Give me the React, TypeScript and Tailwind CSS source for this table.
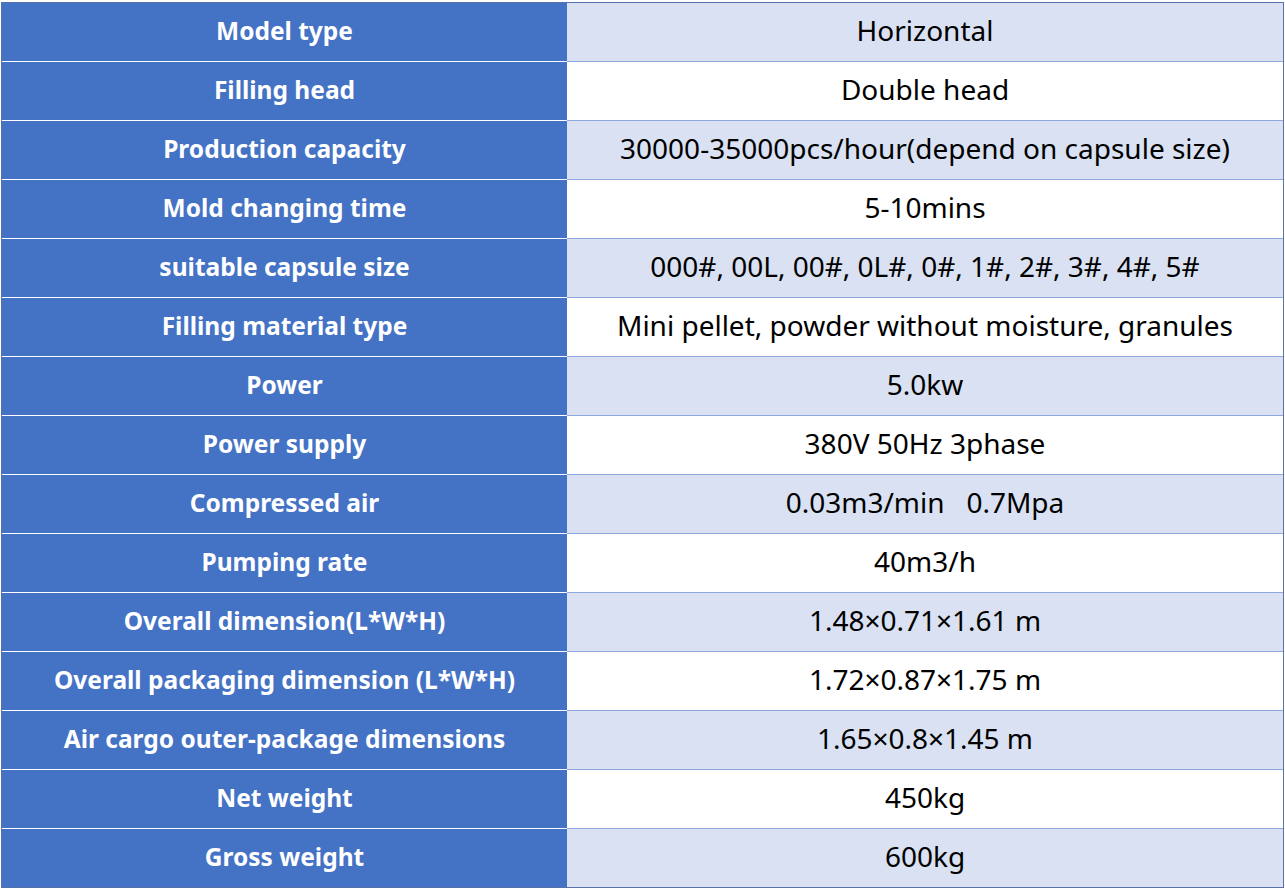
const ROWS: [string, string][] = [
  ['Model type', 'Horizontal'],
  ['Filling head', 'Double head'],
  ['Production capacity', '30000-35000pcs/hour(depend on capsule size)'],
  ['Mold changing time', '5-10mins'],
  ['suitable capsule size', '000#, 00L, 00#, 0L#, 0#, 1#, 2#, 3#, 4#, 5#'],
  ['Filling material type', 'Mini pellet, powder without moisture, granules'],
  ['Power', '5.0kw'],
  ['Power supply', '380V 50Hz 3phase'],
  ['Compressed air', '0.03m3/min\u00a0\u00a0\u00a00.7Mpa'],
  ['Pumping rate', '40m3/h'],
  ['Overall dimension(L*W*H)', '1.48×0.71×1.61 m'],
  ['Overall packaging dimension (L*W*H)', '1.72×0.87×1.75 m'],
  ['Air cargo outer-package dimensions', '1.65×0.8×1.45 m'],
  ['Net weight', '450kg'],
  ['Gross weight', '600kg']
]

export default function App(): React.JSX.Element {
  return (
    <div className="min-h-screen bg-white pt-[2px] pl-[1px] font-['Noto_Sans','Open_Sans',sans-serif]">
      <div className="w-[1283px] border border-[#5672ad] flex flex-col">
        {ROWS.map(([label, value], i) => (
          <div key={label} className="flex h-[59px] first:h-[58px]">
            <div
              className={`w-[565px] shrink-0 bg-[#4472c4] flex items-center justify-center text-white font-bold text-[24.5px] leading-none pb-[1px] ${
                i > 0 ? 'border-t border-white' : ''
              }`}
            >
              {label}
            </div>
            <div
              className={`flex-1 flex items-center justify-center text-black text-[28px] leading-none pb-[4px] ${
                i % 2 === 0 ? 'bg-[#d9e1f2]' : 'bg-white'
              } ${i > 0 ? 'border-t border-[#8ea9db]' : ''}`}
            >
              {value}
            </div>
          </div>
        ))}
      </div>
    </div>
  )
}
